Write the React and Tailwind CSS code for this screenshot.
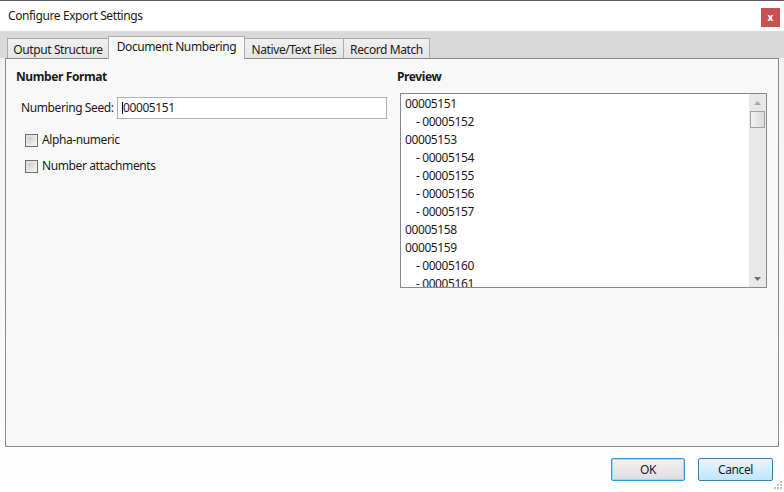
import React from "react";

const items = [
  ["00005151", false],
  ["00005152", true],
  ["00005153", false],
  ["00005154", true],
  ["00005155", true],
  ["00005156", true],
  ["00005157", true],
  ["00005158", false],
  ["00005159", false],
  ["00005160", true],
  ["00005161", true],
];

function Tab({ label, selected, w }) {
  if (selected) {
    return (
      <div
        className={`relative z-10 h-[23px] -mb-px border border-b-0 border-[#acacac] bg-[#f8f8f8] flex items-start justify-center pt-[4px] ${w}`}
      >
        <span className="whitespace-nowrap">{label}</span>
      </div>
    );
  }
  return (
    <div
      className={`h-[20px] border border-[#acacac] border-b-0 -ml-px first:ml-0 bg-gradient-to-b from-[#f0f0f0] to-[#e5e5e5] flex items-center justify-center pt-[2px] ${w}`}
    >
      <span className="whitespace-nowrap">{label}</span>
    </div>
  );
}

function Checkbox({ label }) {
  return (
    <div className="flex items-center h-[14px]">
      <div className="w-[13px] h-[13px] border border-[#707070] bg-gradient-to-br from-[#dcdcdc] to-[#f4f4f4] p-[2px]">
        <div className="w-full h-full bg-gradient-to-br from-[#cbcbcb] to-[#f0f0f0]" />
      </div>
      <span className="ml-[4px] whitespace-nowrap">{label}</span>
    </div>
  );
}

export default function App() {
  return (
    <div className="w-[784px] h-[492px] flex flex-col bg-white text-[12px] leading-none tracking-[-0.4px] text-[#1b1b1b] font-['Noto_Sans',sans-serif] overflow-hidden">
      <div className="h-px bg-[#5c5c5c] shrink-0" />
      {/* Title bar */}
      <div className="h-[30px] shrink-0 flex items-start justify-between pl-[8px] pr-[4px]">
        <span className="mt-[9px]">Configure Export Settings</span>
        <div className="mt-[7px] w-[19px] h-[19px] bg-[#c75050] flex items-center justify-center text-white text-[10px] font-bold pb-[2px] tracking-normal">
          x
        </div>
      </div>
      {/* Tab strip */}
      <div className="h-[27px] shrink-0 bg-[#d9d9d9] flex items-end pl-[7px]">
        <Tab label="Output Structure" w="w-[102px]" />
        <Tab label="Document Numbering" selected w="w-[137px] -ml-px" />
        <Tab label="Native/Text Files" w="w-[100px]" />
        <Tab label="Record Match" w="w-[87px]" />
      </div>
      {/* Body */}
      <div className="flex-1 flex flex-col bg-gradient-to-b from-[#f3f3f3] via-[#f8f8f8] to-white">
        <div className="mx-[5px] h-[389px] border border-[#8a8a8a] bg-[#f8f8f8] flex">
          {/* Left column */}
          <div className="w-[386px] shrink-0 flex flex-col pl-[10px] pt-[12px]">
            <div className="font-bold h-[12px] flex items-center">Number Format</div>
            <div className="flex items-center mt-[14px]">
              <span className="ml-[5px] w-[96px] whitespace-nowrap">Numbering Seed:</span>
              <div className="w-[270px] h-[22px] border border-[#abb0bd] bg-white flex items-center pl-[4px]">
                <span className="border-l border-black pl-0">00005151</span>
              </div>
            </div>
            <div className="mt-[14px] ml-[9px] flex flex-col gap-[12px]">
              <Checkbox label="Alpha-numeric" />
              <Checkbox label="Number attachments" />
            </div>
          </div>
          {/* Right column */}
          <div className="flex-1 flex flex-col pl-[5px] pt-[12px]">
            <div className="font-bold h-[12px] flex items-center">Preview</div>
            <div className="mt-[10px] ml-[3px] w-[367px] h-[195px] border border-[#828790] bg-white flex">
              <div className="flex-1 overflow-hidden pl-[4px] pt-[1px]">
                {items.map(([t, ind]) => (
                  <div key={t} className={`h-[18px] flex items-center whitespace-nowrap ${ind ? "pl-[11px]" : ""}`}>
                    {ind ? `- ${t}` : t}
                  </div>
                ))}
              </div>
              <div className="w-[17px] bg-[#e8e8e8] flex flex-col items-center">
                <div className="h-[17px] w-full flex items-center justify-center">
                  <svg width="7" height="4" viewBox="0 0 7 4">
                    <path d="M0 4 L3.5 0 L7 4 Z" fill="#a8a8a8" />
                  </svg>
                </div>
                <div className="w-[15px] h-[17px] border border-[#a3a3a3] bg-gradient-to-r from-[#f2f2f2] to-[#d9d9d9]" />
                <div className="flex-1" />
                <div className="h-[17px] w-full flex items-center justify-center">
                  <svg width="7" height="4" viewBox="0 0 7 4">
                    <path d="M0 0 L3.5 4 L7 0 Z" fill="#707070" />
                  </svg>
                </div>
              </div>
            </div>
          </div>
        </div>
        {/* Buttons */}
        <div className="relative flex-1 flex items-start justify-end pr-[11px] pt-[11px] gap-[13px]">
          <div className="w-[74px] h-[23px] border border-[#3399dd] rounded-[2px] bg-gradient-to-b from-[#f2f2f2] to-[#dedede] flex items-center justify-center shadow-[inset_0_0_0_1px_#9fd7f7]">
            OK
          </div>
          <div className="w-[75px] h-[23px] border border-[#3c7fb1] rounded-[2px] bg-gradient-to-b from-[#eaf6fd] to-[#bee6fd] flex items-center justify-center">
            Cancel
          </div>
          <svg className="absolute right-[2px] bottom-[2px]" width="10" height="10" viewBox="0 0 10 10">
            {[[8, 0], [8, 3], [5, 3], [8, 6], [5, 6], [2, 6]].map(([x, y], i) => (
              <rect key={i} x={x} y={y + 1} width="2" height="2" fill="#c0c0c0" />
            ))}
          </svg>
        </div>
      </div>
    </div>
  );
}
